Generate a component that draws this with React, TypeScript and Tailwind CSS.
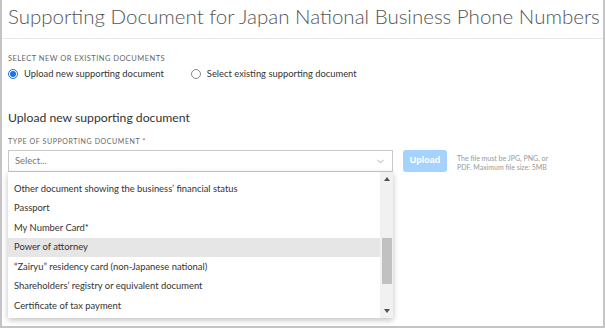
import React from 'react';
import { ChevronDown } from 'lucide-react';

const options = [
    'Other document showing the business\u2019 financial status',
    'Passport',
    'My Number Card*',
    'Power of attorney',
    '\u201cZairyu\u201d residency card (non-Japanese national)',
    'Shareholders\u2019 registry or equivalent document',
    'Certificate of tax payment',
];

const App: React.FC = () => {
    return (
        <div className="w-[605px] h-[328px] bg-white overflow-hidden font-['Lato','Open_Sans',sans-serif]">
            <div className="h-[328px] border-x-2 border-b-2 border-[#c4c4c4] flex flex-col">
                <div className="h-[39px] border-b border-[#e8e8e8] pl-[6px] pt-[1px]">
                    <h1 className="text-[20.5px] leading-[30px] font-light text-[#555] whitespace-nowrap">
                        Supporting Document for Japan National Business Phone Numbers
                    </h1>
                </div>

                <div className="px-[6px] pt-[14px]">
                    <div className="text-[7.5px] leading-[11px] tracking-[0.45px] uppercase text-[#666]">Select new or existing documents</div>
                    <div className="flex items-center mt-[3px] text-[9.4px] leading-[14px] text-[#333]">
                        <label className="flex items-center gap-[6px]">
                            <span className="w-[10px] h-[10px] rounded-full border border-[#1a73e8] flex items-center justify-center">
                                <span className="w-[6px] h-[6px] rounded-full bg-[#1a73e8]" />
                            </span>
                            Upload new supporting document
                        </label>
                        <label className="flex items-center gap-[6px] ml-[27px]">
                            <span className="w-[10px] h-[10px] rounded-full border border-[#888]" />
                            Select existing supporting document
                        </label>
                    </div>

                    <h2 className="mt-[28px] text-[12.2px] leading-[18px] text-[#333]">Upload new supporting document</h2>

                    <div className="mt-[9px] text-[7px] leading-[10px] tracking-[0.6px] uppercase text-[#666]">
                        Type of supporting document <span className="text-[#e53935]">*</span>
                    </div>

                    <div className="flex items-start gap-[10px] mt-[4px]">
                        <div className="relative w-[385px]">
                            <div className="h-[22px] border border-[#c8c8c8] flex items-center justify-between pl-[6px] pr-[6px] text-[9.4px] text-[#777]">
                                <span>Select...</span>
                                <ChevronDown className="w-[11px] h-[11px] text-[#777]" strokeWidth={1.3} />
                            </div>
                            <div className="absolute left-0 top-[22px] w-[385px] h-[146px] bg-white shadow-[0_2px_6px_rgba(0,0,0,0.25)] flex">
                                <div className="flex-1 pt-[7px]">
                                    {options.map((o, i) => (
                                        <div
                                            key={o}
                                            className={`h-[19.5px] flex items-center pl-[6px] text-[9.4px] text-[#333] ${i === 3 ? 'bg-[#e6e6e6]' : ''}`}
                                        >
                                            {o}
                                        </div>
                                    ))}
                                </div>
                                <div className="w-[13px] bg-[#f1f1f1] flex flex-col items-center justify-between py-[5px] relative">
                                    <span className="w-0 h-0 border-x-[3.5px] border-x-transparent border-b-[4px] border-b-[#505050]" />
                                    <span className="absolute left-[2px] top-[66px] w-[10px] h-[46px] bg-[#c1c1c1]" />
                                    <span className="w-0 h-0 border-x-[3.5px] border-x-transparent border-t-[4px] border-t-[#505050]" />
                                </div>
                            </div>
                        </div>
                        <button className="h-[22px] w-[44px] rounded-[3px] bg-[#a6d2ff] text-white text-[9px] font-bold font-['Liberation_Sans',sans-serif]">
                            Upload
                        </button>
                        <div className="text-[7px] leading-[9px] text-[#999] pt-[4px]">
                            The file must be JPG, PNG, or<br />PDF. Maximum file size: 5MB
                        </div>
                    </div>
                </div>
            </div>
        </div>
    );
};

export default App;
